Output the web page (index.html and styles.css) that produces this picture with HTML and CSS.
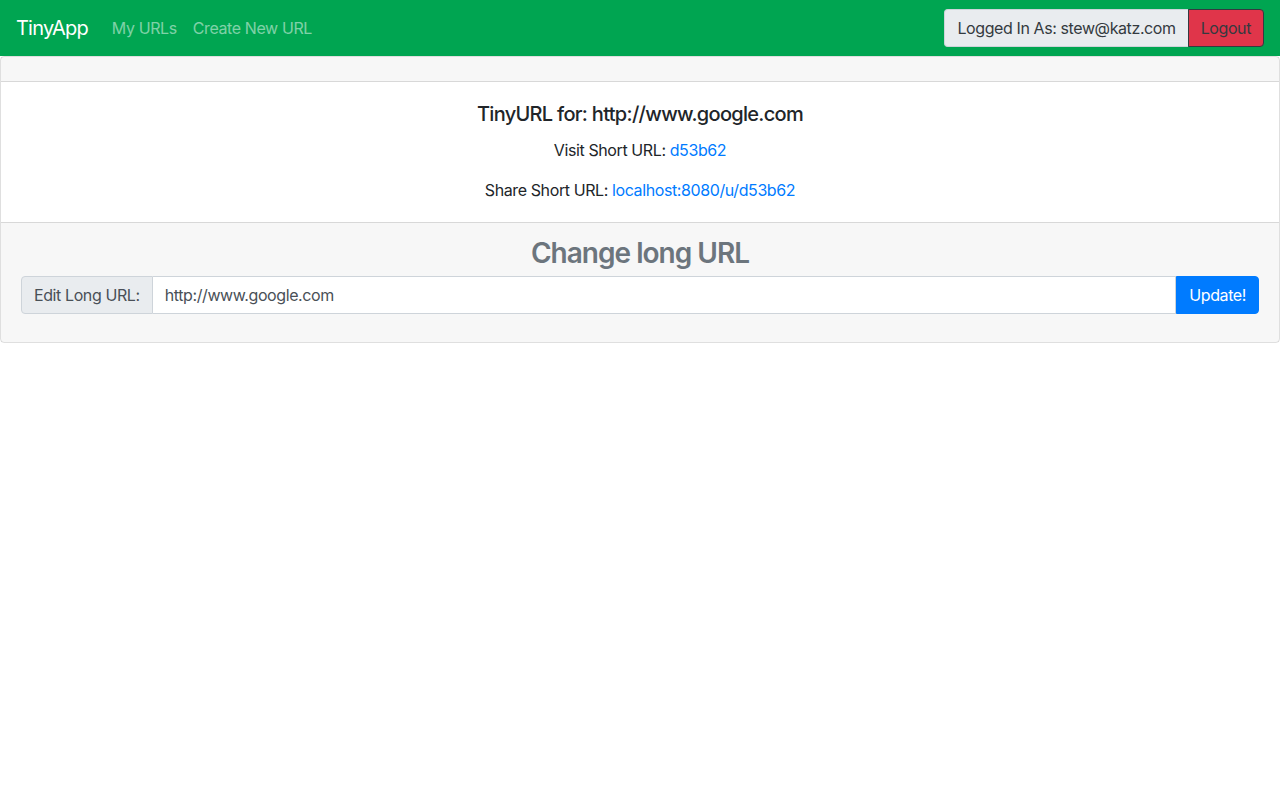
FILE: index.html
```html
<!DOCTYPE html>
<html lang="en">
<head>
<meta charset="utf-8">
<title>TinyApp</title>
<link rel="stylesheet" href="styles.css">
</head>
<body>
<nav class="navbar">
  <a class="brand" href="#">TinyApp</a>
  <div class="nav-links">
    <a class="nav-link" href="#">My URLs</a>
    <a class="nav-link" href="#">Create New URL</a>
  </div>
  <div class="user-group">
    <span class="group-text">Logged In As: stew@katz.com</span>
    <button class="btn-logout" type="button">Logout</button>
  </div>
</nav>
<div class="card">
  <div class="card-header"></div>
  <div class="card-body">
    <h5 class="card-title">TinyURL for: http://www.google.com</h5>
    <p class="card-text">Visit Short URL: <a href="#">d53b62</a></p>
    <p class="card-text">Share Short URL: <a href="#">localhost:8080/u/d53b62</a></p>
  </div>
  <div class="card-footer">
    <h3 class="footer-title">Change long URL</h3>
    <form class="edit-form">
      <span class="prepend">Edit Long URL:</span>
      <input class="url-input" type="text" value="http://www.google.com">
      <button class="btn-update" type="button">Update!</button>
    </form>
  </div>
</div>
</body>
</html>
```
FILE: styles.css
```css
* { box-sizing: border-box; }
body {
  margin: 0;
  font-family: Inter, "Noto Sans", "Liberation Sans", sans-serif;
  font-size: 16px;
  line-height: 1.5;
  letter-spacing: -0.025em;
  color: #212529;
  background: #fff;
}
.navbar {
  display: flex;
  align-items: center;
  height: 56px;
  padding: 0 16px;
  background: #00a551;
}
.brand {
  color: #fff;
  font-size: 20px;
  letter-spacing: -0.04em;
  text-decoration: none;
  margin-right: 16px;
  line-height: 30px;
}
.nav-links {
  display: flex;
  flex: 1;
}
.nav-link {
  color: rgba(255, 255, 255, 0.5);
  text-decoration: none;
  padding: 8px;
}
.user-group {
  display: flex;
  height: 38px;
}
.group-text {
  display: flex;
  align-items: center;
  padding: 0 12px;
  background: #e9ecef;
  border: 1px solid #ced4da;
  border-right: none;
  border-radius: 4px 0 0 4px;
  color: #343a40;
}
.btn-logout {
  font: inherit;
  letter-spacing: inherit;
  color: #343a40;
  background: #e0354a;
  border: 1px solid #343a40;
  border-radius: 0 4px 4px 0;
  padding: 0 12px;
}
.card {
  border: 1px solid rgba(0, 0, 0, 0.125);
  border-radius: 4px;
}
.card-header {
  height: 25px;
  background: rgba(0, 0, 0, 0.03);
  border-bottom: 1px solid rgba(0, 0, 0, 0.125);
}
.card-body {
  padding: 20px;
  text-align: center;
}
.card-title {
  margin: 0 0 12px;
  font-size: 20px;
  font-weight: 500;
  line-height: 1.2;
  letter-spacing: -0.035em;
}
.card-text {
  margin: 0 0 16px;
}
.card-text:last-child { margin-bottom: 0; }
.card-text a {
  color: #007bff;
  text-decoration: none;
}
.card-footer {
  padding: 12px 20px;
  background: rgba(0, 0, 0, 0.03);
  border-top: 1px solid rgba(0, 0, 0, 0.125);
}
.footer-title {
  margin: 2px 0 5px;
  text-align: center;
  font-size: 28px;
  font-weight: 600;
  line-height: 1.2;
  letter-spacing: -0.035em;
  color: #6c757d;
}
.edit-form {
  display: flex;
  height: 38px;
  margin-bottom: 16px;
}
.prepend {
  display: flex;
  align-items: center;
  padding: 0 12px;
  background: #e9ecef;
  border: 1px solid #ced4da;
  border-radius: 4px 0 0 4px;
  color: #495057;
}
.url-input {
  flex: 1;
  font: inherit;
  letter-spacing: inherit;
  color: #495057;
  background: #fff;
  border: 1px solid #ced4da;
  border-left: none;
  padding: 0 12px;
  outline: none;
}
.btn-update {
  font: inherit;
  letter-spacing: inherit;
  color: #fff;
  background: #007bff;
  border: 1px solid #007bff;
  border-radius: 0 4px 4px 0;
  padding: 0 12px;
}
```
